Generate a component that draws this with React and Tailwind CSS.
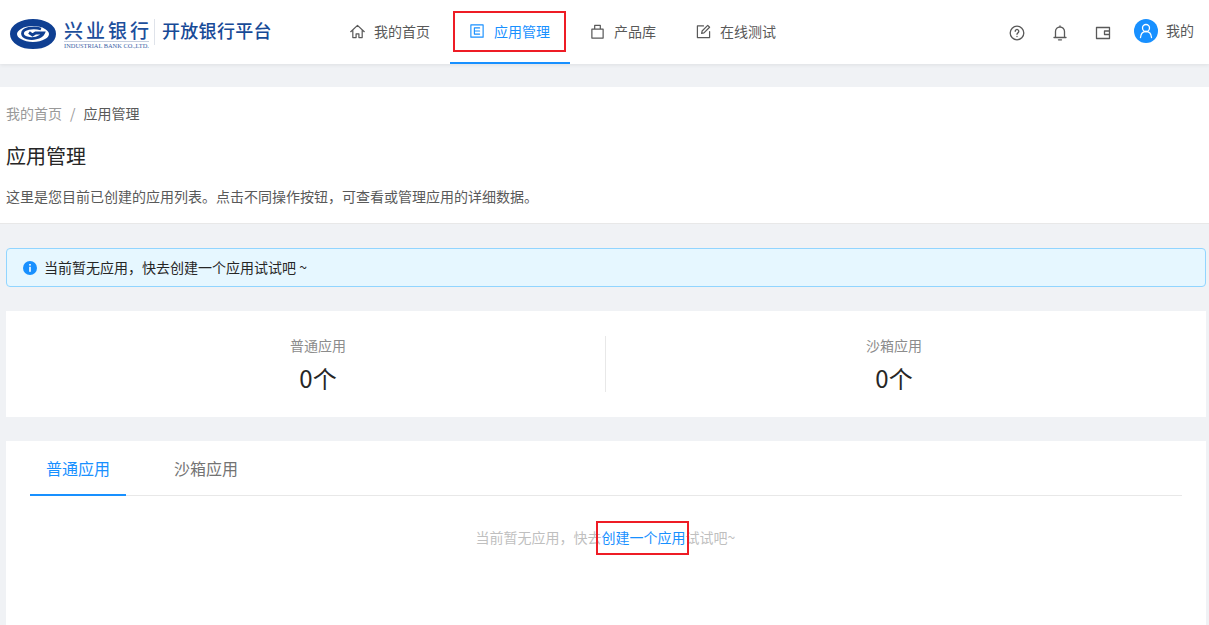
import React from "react";

const font = { fontFamily: '"Noto Sans CJK SC", "Liberation Sans", sans-serif' };

function Logo() {
  return (
    <div className="flex items-center w-[330px] pl-[10px] shrink-0">
      <svg width="46" height="30" viewBox="0 0 46 30" className="shrink-0 mt-[4px]">
        <ellipse cx="23" cy="15" rx="19.500" ry="11.500" fill="#fff" stroke="#0f3f92" strokeWidth="7" />
        <path d="M31 10C23 7.500 12.500 9.500 12.500 14.500 12.500 18.500 20 20.500 26 19 30 18 32.500 16 33.500 14L25.500 14 22.500 16 19 13.500" fill="none" stroke="#0f3f92" strokeWidth="2.800" />
      </svg>
      <div className="ml-[8px] w-[85px] flex flex-col items-center shrink-0 mt-[4px]">
        <span className="text-[19px] leading-[21px] font-medium text-[#1d4f9c] tracking-[3px] -mr-[3px] whitespace-nowrap">兴业银行</span>
        <span className="mt-[1px] border-t border-[#c5cede] text-[6.400px] leading-[7px] text-[#3a62a6] whitespace-nowrap" style={{ fontFamily: '"Liberation Serif", serif' }}>INDUSTRIAL BANK CO.,LTD.</span>
      </div>
      <div className="w-px h-[26px] bg-[#dfe3ea] ml-[5px] mr-[7px] shrink-0" />
      <span className="text-[18px] leading-[24px] font-medium tracking-[0.3px] text-[#174a97] whitespace-nowrap -mt-[5px]">开放银行平台</span>
    </div>
  );
}

const I = ({ children, size = 15, className = "" }) => (
  <svg width={size} height={size} viewBox="0 0 16 16" fill="none" stroke="currentColor" strokeWidth="1.300" strokeLinejoin="round" strokeLinecap="round" className={`shrink-0 ${className}`}>{children}</svg>
);

function NavItem({ icon, label, active }) {
  return (
    <div className={`relative h-[64px] pl-[20px] pr-[20px] flex items-center gap-[10px] text-[14px] whitespace-nowrap border-b-2 ${active ? "text-[#1890ff] border-[#1890ff]" : "text-[#595959] border-transparent"}`}>
      <span className="w-[14px] flex justify-center shrink-0">{icon}</span>
      <span>{label}</span>
      {active && <div className="absolute left-[3px] top-[11px] w-[113px] h-[41px] border-2 border-[#ee1c25]" />}
    </div>
  );
}

function Stat({ label, className }) {
  return (
    <div className={`flex-1 flex flex-col items-center ${className}`}>
      <span className="text-[14px] leading-[22px] text-[#8c8c8c]">{label}</span>
      <span className="text-[24px] leading-[32px] mt-[6px] text-[#262626]">0个</span>
    </div>
  );
}

export default function App() {
  return (
    <div className="min-h-[625px] h-[625px] overflow-hidden bg-[#f0f2f5]" style={font}>
      <header className="h-[64px] bg-white flex items-center shadow-[0_1px_4px_rgba(0,0,0,0.08)] relative">
        <Logo />
        <nav className="flex items-center">
          <NavItem label="我的首页" icon={<I><path d="M.8 8.200 8 1.500l7.200 6.700M3 6.500V14.500h3.500v-4h3v4H13V6.500" /></I>} />
          <NavItem active label="应用管理" icon={<I size={14}><rect x="1" y="1" width="14" height="14" /><path d="M5 4.500h6M5 8h6M5 11.500h6M5 4.500v7" /></I>} />
          <NavItem label="产品库" icon={<I><path d="M2 5.500h12V15H2zM5 5.500V1.500h6v4" /></I>} />
          <NavItem label="在线测试" icon={<I><path d="M8 2H1.500v12.500h13V8" /><path d="M6 10l.5-2.500 6-6 2 2-6 6z" /></I>} />
        </nav>
        <div className="ml-auto flex items-center pr-[15px] text-[#595959]">
          <div className="flex items-center gap-[27px] mt-[2px]">
            <I size={16}><circle cx="8" cy="8" r="6.800" /><path d="M6.200 6.300a1.800 1.800 0 1 1 2.700 1.600c-.6.400-.9.700-.9 1.400" /><path d="M8 11.300v.3" /></I>
            <I size={16}><path d="M3.500 12.500V6.500a4.500 4.500 0 0 1 9 0v6zM2 12.500h12M8 .8V2M6.500 14.800h3" /></I>
            <I size={16}><path d="M1.500 2.500h13v11h-13zM14.500 6H9.500v3.500h5" /></I>
          </div>
          <div className="flex items-center ml-[23px] -mt-[2px]">
            <div className="w-[24px] h-[24px] rounded-full bg-[#1890ff] flex items-center justify-center text-white">
              <I size={16}><circle cx="8" cy="5" r="3.500" /><path d="M2.500 14.500c.3-3.500 2.500-6 5.500-6s5.200 2.500 5.500 6" /></I>
            </div>
            <span className="ml-[8px] text-[14px] -mt-[1px]">我的</span>
          </div>
        </div>
      </header>

      <main className="pl-[6px] pr-[3px] pt-[23px] flex flex-col gap-[24px]">
        <section className="-ml-[6px] -mr-[3px] h-[137px] bg-white border-b border-[#e8e8e8] pl-[6px] pt-[15px]">
          <div className="flex items-center text-[14px] leading-[22px]">
            <span className="text-[#999999]">我的首页</span>
            <span className="mx-[8px] text-[#999999]">/</span>
            <span className="text-[#595959]">应用管理</span>
          </div>
          <h1 className="mt-[18px] text-[20px] leading-[28px] text-[#262626]">应用管理</h1>
          <p className="mt-[15px] text-[14px] leading-[22px] text-[#595959]">这里是您目前已创建的应用列表。点击不同操作按钮，可查看或管理应用的详细数据。</p>
        </section>

        <div className="h-[39px] rounded-[4px] border border-[#91d5ff] bg-[#e6f7ff] flex items-center pl-[16px] text-[14px] text-[#262626]">
          <svg width="14" height="14" viewBox="0 0 14 14" className="shrink-0"><circle cx="7" cy="7" r="7" fill="#1890ff" /><rect x="6.200" y="3" width="1.600" height="1.600" fill="#fff" /><rect x="6.200" y="5.800" width="1.600" height="5" fill="#fff" /></svg>
          <span className="ml-[7px]">当前暂无应用，快去创建一个应用试试吧 ~</span>
        </div>

        <section className="h-[106px] bg-white flex items-center">
          <Stat label="普通应用" className="pl-[24px]" />
          <div className="w-px h-[56px] bg-[#e8e8e8] -ml-[1px] -mt-[1px]" />
          <Stat label="沙箱应用" className="pr-[24px]" />
        </section>

        <section className="h-[300px] bg-white px-[24px]">
          <div className="flex h-[55px] border-b border-[#e8e8e8] text-[16px]">
            <div className="px-[16px] h-[55px] flex items-center text-[#1890ff] border-b-2 border-[#1890ff]">普通应用</div>
            <div className="ml-[32px] px-[16px] h-[55px] flex items-center text-[#737373] border-b-2 border-transparent">沙箱应用</div>
          </div>
          <div className="mt-[30px] pr-[1px] flex justify-center text-[14px] leading-[22px] text-[#bfbfbf]">
            <span>当前暂无应用，快去</span>
            <span className="relative text-[#1890ff]">创建一个应用
              <span className="absolute left-[-6px] top-[-5px] w-[93px] h-[34px] border-2 border-[#ee1c25]" />
            </span>
            <span>试试吧~</span>
          </div>
        </section>
      </main>
    </div>
  );
}
